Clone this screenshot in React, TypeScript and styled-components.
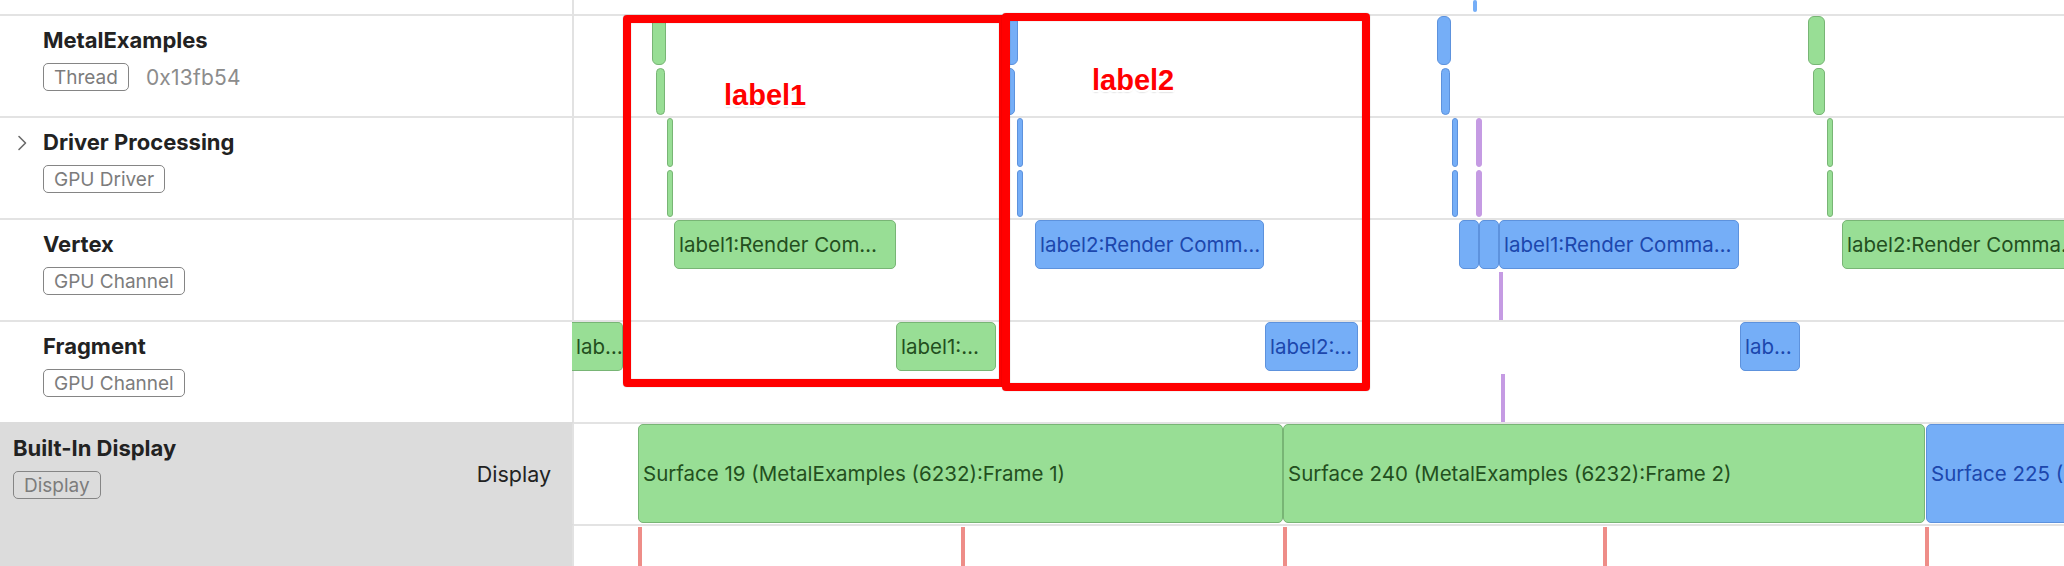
import React from 'react';
import styled, { createGlobalStyle, css } from 'styled-components';

const GlobalStyle = createGlobalStyle`
  html, body { margin: 0; padding: 0; background: #fff; overflow: hidden; }
  body { font-family: Inter, "Liberation Sans", sans-serif; -webkit-font-smoothing: antialiased; }
  * { box-sizing: border-box; }
`;

type Tone = 'green' | 'blue' | 'purple' | 'red';

const tones: Record<Tone, { bg: string; border: string; text: string }> = {
  green: { bg: '#98de95', border: '#78b575', text: '#234f1e' },
  blue: { bg: '#75aef7', border: '#5d92dd', text: '#1c47ad' },
  purple: { bg: '#c59be3', border: '#c59be3', text: '#000' },
  red: { bg: '#ee8d88', border: '#ee8d88', text: '#000' },
};

interface Seg {
  x: number;
  w: number;
  y: number;
  h: number;
  tone: Tone;
  r?: number;
  text?: string;
  clipLeft?: boolean;
  flat?: boolean;
}

interface Lane {
  key: string;
  height: number;
  line: boolean;
  kind: 'top' | 'track' | 'display' | 'rest';
  title?: string;
  badge?: string;
  extra?: string;
  chevron?: boolean;
  side?: string;
  segs: Seg[];
}

const pair = (x: number, w: number, tone: Tone, r = 3): Seg[] => [
  { x, w, y: 0, h: 49, tone, r },
  { x, w, y: 52, h: 47, tone, r },
];

const lanes: Lane[] = [
  {
    key: 'top',
    height: 14,
    line: false,
    kind: 'top',
    segs: [{ x: 899, w: 3, y: 0, h: 12, tone: 'blue', r: 2, flat: true }],
  },
  {
    key: 'metal',
    height: 102,
    line: true,
    kind: 'track',
    title: 'MetalExamples',
    badge: 'Thread',
    extra: '0x13fb54',
    segs: [
      { x: 78, w: 14, y: 0, h: 49, tone: 'green', r: 6 },
      { x: 82, w: 9, y: 52, h: 47, tone: 'green', r: 5 },
      { x: 431, w: 13, y: 0, h: 49, tone: 'blue', r: 6 },
      { x: 431, w: 10, y: 52, h: 47, tone: 'blue', r: 5 },
      { x: 863, w: 14, y: 0, h: 49, tone: 'blue', r: 6 },
      { x: 867, w: 9, y: 52, h: 47, tone: 'blue', r: 5 },
      { x: 1234, w: 17, y: 0, h: 49, tone: 'green', r: 6 },
      { x: 1239, w: 12, y: 52, h: 47, tone: 'green', r: 5 },
    ],
  },
  {
    key: 'driver',
    height: 102,
    line: true,
    kind: 'track',
    title: 'Driver Processing',
    badge: 'GPU Driver',
    chevron: true,
    segs: [
      ...pair(93, 4, 'green'),
      ...pair(443, 4, 'blue'),
      ...pair(878, 5, 'blue'),
      ...pair(902, 4, 'purple'),
      ...pair(1253, 6, 'green'),
    ],
  },
  {
    key: 'vertex',
    height: 102,
    line: true,
    kind: 'track',
    title: 'Vertex',
    badge: 'GPU Channel',
    segs: [
      { x: 100, w: 222, y: 0, h: 49, tone: 'green', r: 5, text: 'label1:Render Com…' },
      { x: 461, w: 229, y: 0, h: 49, tone: 'blue', r: 5, text: 'label2:Render Comm…' },
      { x: 885, w: 20, y: 0, h: 49, tone: 'blue', r: 5 },
      { x: 905, w: 20, y: 0, h: 49, tone: 'blue', r: 5 },
      { x: 925, w: 240, y: 0, h: 49, tone: 'blue', r: 5, text: 'label1:Render Comma…' },
      { x: 1268, w: 240, y: 0, h: 49, tone: 'green', r: 5, text: 'label2:Render Comma…' },
      { x: 925, w: 2, y: 52, h: 48, tone: 'purple', r: 0, flat: true },
    ],
  },
  {
    key: 'fragment',
    height: 102,
    line: true,
    kind: 'track',
    title: 'Fragment',
    badge: 'GPU Channel',
    segs: [
      { x: -2, w: 51, y: 0, h: 49, tone: 'green', r: 5, text: 'lab…', clipLeft: true },
      { x: 322, w: 100, y: 0, h: 49, tone: 'green', r: 5, text: 'label1:…' },
      { x: 691, w: 93, y: 0, h: 49, tone: 'blue', r: 5, text: 'label2:…' },
      { x: 1166, w: 60, y: 0, h: 49, tone: 'blue', r: 5, text: 'lab…' },
      { x: 927, w: 2, y: 52, h: 48, tone: 'purple', r: 0, flat: true },
    ],
  },
  {
    key: 'display',
    height: 102,
    line: true,
    kind: 'display',
    title: 'Built-In Display',
    badge: 'Display',
    side: 'Display',
    segs: [
      { x: 64, w: 645, y: 0, h: 99, tone: 'green', r: 5, text: 'Surface 19 (MetalExamples (6232):Frame 1)' },
      { x: 709, w: 642, y: 0, h: 99, tone: 'green', r: 5, text: 'Surface 240 (MetalExamples (6232):Frame 2)' },
      { x: 1352, w: 700, y: 0, h: 99, tone: 'blue', r: 5, text: 'Surface 225 (MetalExamples (6232):Frame 3)' },
    ],
  },
  {
    key: 'rest',
    height: 0,
    line: true,
    kind: 'rest',
    segs: [64, 387, 709, 1029, 1351].map((x) => ({
      x,
      w: 2,
      y: 1,
      h: 60,
      tone: 'red' as Tone,
      r: 0,
      flat: true,
    })),
  },
];

const Page = styled.div`
  position: relative;
  width: 2064px;
  height: 566px;
  display: flex;
  flex-direction: column;
  overflow: hidden;
  background: #fff;
`;

const Row = styled.div<{ $h: number }>`
  display: flex;
  flex: ${(p) => (p.$h ? `0 0 ${p.$h}px` : '1 1 auto')};
  min-height: 0;
`;

const LabelCell = styled.div<{ $gray: boolean; $line: boolean }>`
  flex: 0 0 574px;
  display: flex;
  align-items: stretch;
  background: ${(p) => (p.$gray ? '#dcdcdc' : '#fff')};
  border-right: 2px solid #e2e2e2;
  border-top: ${(p) => (p.$line ? `2px solid ${p.$gray ? '#dcdcdc' : '#e3e3e3'}` : 'none')};
  padding-right: 21px;
`;

const ChevronSlot = styled.div<{ $wide: boolean }>`
  flex: 0 0 ${(p) => (p.$wide ? 43 : 13)}px;
  display: flex;
  justify-content: flex-end;
  align-items: flex-start;
  padding: 17px ${(p) => (p.$wide ? 16 : 0)}px 0 0;
`;

const Info = styled.div`
  display: flex;
  flex-direction: column;
  align-items: flex-start;
  padding-top: 11px;
  gap: 10px;
`;

const Title = styled.div`
  font-size: 22px;
  line-height: 26px;
  font-weight: 700;
  color: #222;
  white-space: nowrap;
`;

const Meta = styled.div`
  display: flex;
  align-items: center;
  gap: 17px;
`;

const Badge = styled.span`
  display: inline-flex;
  align-items: center;
  height: 28px;
  padding: 0 10px;
  border: 1.5px solid #858585;
  border-radius: 5px;
  font-size: 19px;
  color: #7c7c7c;
  white-space: nowrap;
`;

const Address = styled.span`
  font-size: 21px;
  color: #8c8c8c;
  letter-spacing: 0.2px;
`;

const SideLabel = styled.div`
  margin-left: auto;
  align-self: center;
  font-size: 21.5px;
  line-height: 26px;
  color: #222;
`;

const Track = styled.div<{ $line: boolean }>`
  position: relative;
  flex: 1 1 auto;
  border-top: ${(p) => (p.$line ? '2px solid #e3e3e3' : 'none')};
`;

const Bar = styled.div<{
  $x: number;
  $w: number;
  $y: number;
  $h: number;
  $tone: Tone;
  $r: number;
  $clipLeft: boolean;
  $flat: boolean;
}>`
  position: absolute;
  z-index: 1;
  left: ${(p) => p.$x}px;
  top: ${(p) => p.$y}px;
  width: ${(p) => p.$w}px;
  height: ${(p) => p.$h}px;
  display: flex;
  align-items: center;
  overflow: hidden;
  padding-left: 4px;
  background: ${(p) => tones[p.$tone].bg};
  color: ${(p) => tones[p.$tone].text};
  border-radius: ${(p) => p.$r}px;
  ${(p) =>
    !p.$flat &&
    css`
      border: 1px solid ${tones[p.$tone].border};
    `}
  ${(p) =>
    p.$clipLeft &&
    css`
      border-left: none;
      border-top-left-radius: 0;
      border-bottom-left-radius: 0;
    `}
`;

const BarText = styled.span`
  display: block;
  font-size: 20.5px;
  line-height: 24px;
  white-space: nowrap;
`;

const Mark = styled.div<{ $x: number; $y: number; $w: number; $h: number }>`
  position: absolute;
  z-index: 3;
  left: ${(p) => p.$x}px;
  top: ${(p) => p.$y}px;
  width: ${(p) => p.$w}px;
  height: ${(p) => p.$h}px;
  border: 8px solid #ff0000;
  border-radius: 4px;
  box-shadow: 0 0 1px rgba(0, 0, 0, 0.45), inset 0 0 1px rgba(0, 0, 0, 0.45);
`;

const MarkLabel = styled.div<{ $x: number; $y: number }>`
  position: absolute;
  z-index: 4;
  left: ${(p) => p.$x}px;
  top: ${(p) => p.$y}px;
  font-family: "Liberation Sans", Arial, sans-serif;
  font-weight: 700;
  font-size: 29px;
  line-height: 29px;
  color: #ff0000;
  text-shadow: -1.5px -1.5px 0 #fff, 1.5px -1.5px 0 #fff, -1.5px 1.5px 0 #fff, 1.5px 1.5px 0 #fff,
    0 -1.5px 0 #fff, 0 1.5px 0 #fff, -1.5px 0 0 #fff, 1.5px 0 0 #fff, 0 2px 2px rgba(0, 0, 0, 0.35);
`;

const Chevron = () => (
  <svg width="10" height="16" viewBox="0 0 10 16" fill="none">
    <polyline points="2,1.5 8.5,8 2,14.5" stroke="#6a6a6a" strokeWidth="1.6" strokeLinecap="round" strokeLinejoin="round" />
  </svg>
);

const Label = ({ lane }: { lane: Lane }) => {
  const gray = lane.kind === 'display' || lane.kind === 'rest';
  return (
    <LabelCell $gray={gray} $line={lane.line}>
      {lane.title && (
        <>
          <ChevronSlot $wide={lane.kind !== 'display'}>{lane.chevron && <Chevron />}</ChevronSlot>
          <Info>
            <Title>{lane.title}</Title>
            <Meta>
              <Badge>{lane.badge}</Badge>
              {lane.extra && <Address>{lane.extra}</Address>}
            </Meta>
          </Info>
          {lane.side && <SideLabel>{lane.side}</SideLabel>}
        </>
      )}
    </LabelCell>
  );
};

export default function App() {
  return (
    <>
      <GlobalStyle />
      <Page>
        {lanes.map((lane) => (
          <Row key={lane.key} $h={lane.height}>
            <Label lane={lane} />
            <Track $line={lane.line}>
              {lane.segs.map((s, i) => (
                <Bar
                  key={i}
                  $x={s.x}
                  $w={s.w}
                  $y={s.y}
                  $h={s.h}
                  $tone={s.tone}
                  $r={s.r ?? 5}
                  $clipLeft={!!s.clipLeft}
                  $flat={!!s.flat}
                >
                  {s.text && <BarText>{s.text}</BarText>}
                </Bar>
              ))}
            </Track>
          </Row>
        ))}
        <Mark $x={623} $y={15} $w={384} $h={372} />
        <Mark $x={1002} $y={13} $w={368} $h={378} />
        <MarkLabel $x={724} $y={81}>label1</MarkLabel>
        <MarkLabel $x={1092} $y={66}>label2</MarkLabel>
      </Page>
    </>
  );
}
